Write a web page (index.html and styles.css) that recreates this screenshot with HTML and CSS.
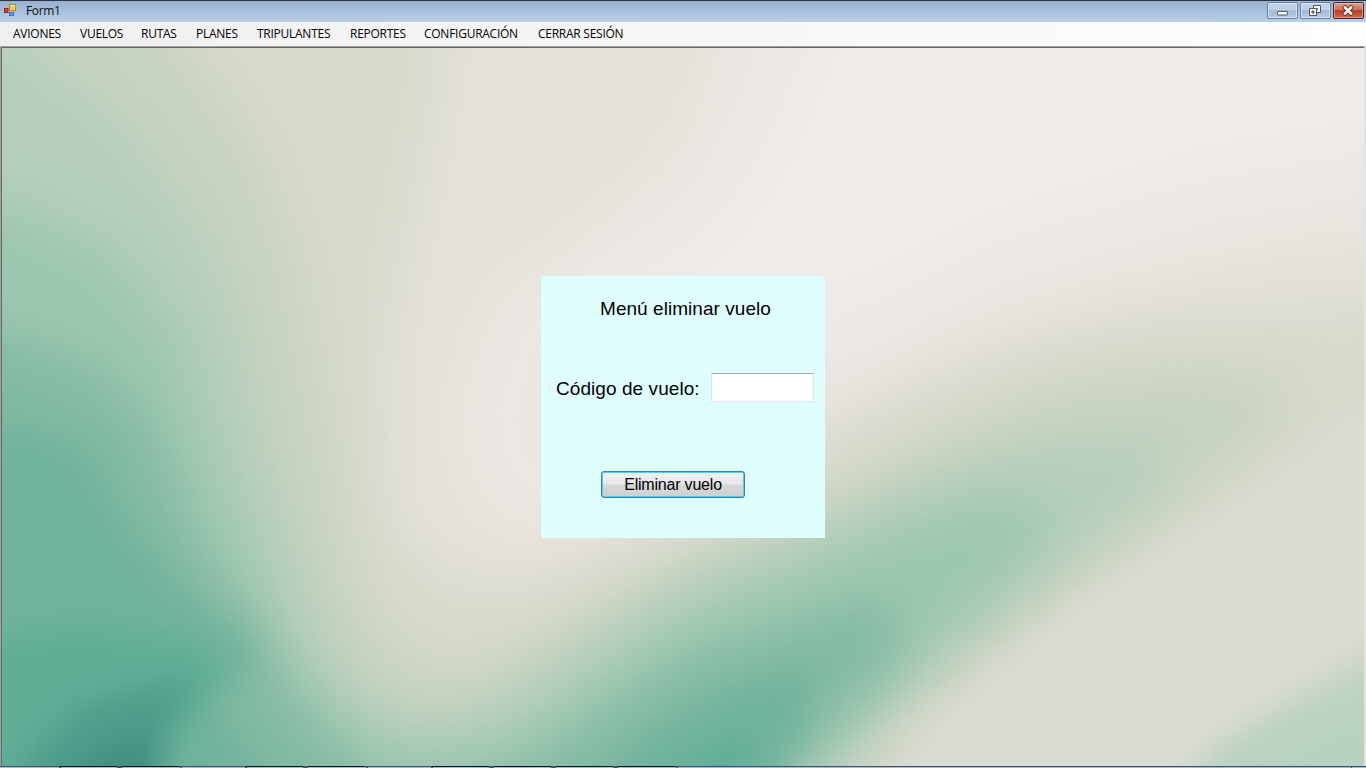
FILE: index.html
```html
<!DOCTYPE html>
<html lang="es">
<head>
<meta charset="utf-8">
<title>Form1</title>
<link rel="stylesheet" href="styles.css">
</head>
<body>
<div class="window">
  <header class="titlebar">
    <svg class="app-icon" width="14" height="13" viewBox="0 0 14 13">
      <rect x=".5" y="4.500" width="3.500" height="4" fill="#d4453c" stroke="#a11f1b"/>
      <rect x="5.500" y=".500" width="6" height="6" fill="#f6cf55" stroke="#b98a23"/>
      <rect x="5.500" y="8.500" width="4" height="3" fill="#6a9cec" stroke="#3d6fc4"/>
      <path d="M6.500 1.500h4.500" stroke="#fff0b0"/>
    </svg>
    <h1 class="title">Form1</h1>
    <div class="controls">
      <button class="control" aria-label="Minimizar">
        <svg width="29" height="16"><rect x="9.500" y="9.500" width="10" height="3.500" rx=".5" fill="#fff" stroke="#535866"/></svg>
      </button>
      <button class="control" aria-label="Restaurar">
        <svg width="29" height="16"><path d="M12.500 3.500h7v7h-7z" fill="#fff" stroke="#535866"/><path d="M15.500 6.500h1v1h-1z" fill="#8fa9c8" stroke="#535866"/><path d="M8.500 6.500h7v7h-7z" fill="#fff" stroke="#535866"/><path d="M11 9h2v2h-2z" fill="#8fa9c8" stroke="#535866"/></svg>
      </button>
      <button class="control close" aria-label="Cerrar">
        <svg width="29" height="16"><path d="M11 5.500l6 6M17 5.500l-6 6" stroke="#5a3a3c" stroke-width="4.400" stroke-linecap="square"/><path d="M11 5.500l6 6M17 5.500l-6 6" stroke="#f6f2f2" stroke-width="2.500" stroke-linecap="square"/></svg>
      </button>
    </div>
  </header>
  <nav class="menu">
    <span class="item">AVIONES</span><span class="item">VUELOS</span><span class="item">RUTAS</span><span class="item">PLANES</span><span class="item">TRIPULANTES</span><span class="item">REPORTES</span><span class="item">CONFIGURACIÓN</span><span class="item">CERRAR SESIÓN</span>
  </nav>
  <main class="client">
    <svg class="wallpaper" width="1362" height="718" viewBox="2 48 1362 718" preserveAspectRatio="none">
      <defs>
        <filter id="soft" filterUnits="userSpaceOnUse" x="-200" y="-150" width="1766" height="1118" color-interpolation-filters="sRGB"><feGaussianBlur stdDeviation="25"/></filter>
        <filter id="mid" filterUnits="userSpaceOnUse" x="-200" y="-150" width="1766" height="1118" color-interpolation-filters="sRGB"><feGaussianBlur stdDeviation="15"/></filter>
      </defs>
      <rect x="0" y="40" width="1366" height="728" fill="#e5e2da"/>
      <g filter="url(#soft)">
        <path fill="#eae6e1" d="M750-60H1500V210L1250 250 1000 320 850 400 700 450 580 535 490 530 450 420 490 300 600 220 680 150z"/>
        <path fill="#f0ebe8" d="M850-60H1500V130L1200 180 1000 240 880 300 700 370 600 380 600 290 700 240 760 160z"/>
      </g>
      <g filter="url(#soft)">
        <path fill="#d8dacc" d="M-150-60H430L450 46 430 150 410 250 390 350 385 450 395 520 425 560 470 585 530 585 600 560 650 540 700 515 830 435 900 398 1000 358 1100 328 1200 312 1500 295V950H-150z"/>
      </g>
      <g filter="url(#soft)">
        <path fill="#c8d3c1" d="M-150-60H120L190 46 260 150 295 250 315 350 335 450 350 550 375 620 415 660 460 675 520 650 600 605 690 555 800 510 850 483 950 430 1050 388 1160 370 1275 375 1290 420 1205 490 1120 555 1020 625 920 700 840 790 780 950H-150z"/>
        <path fill="#b5cfbb" d="M-150-60L20 30 130 130 210 240 245 350 265 450 295 550 320 630 355 685 400 720 470 715 530 680 600 635 690 576 800 535 870 503 960 468 1050 440 1170 440 1160 490 1070 560 980 630 895 695 815 785V950H-150z"/>
        <path fill="#b7d2be" d="M1500 625L1366 668 1290 700 1210 740 1100 850H1500z"/>
      </g>
      <g filter="url(#mid)">
        <path fill="#dbdcd2" d="M1500 340L1365 405 1270 480 1175 544 1085 602 995 672 930 730 870 830H1130L1220 735 1366 640 1500 590z"/>
      </g>
      <g filter="url(#soft)">
        <path fill="#9cc6af" d="M-150 190L0 200 110 250 180 340 210 450 250 550 284 640 315 690 355 725 400 748 480 745 530 725 600 672 690 615 800 570 900 525 1000 495 1060 520 1010 580 940 645 880 700 800 790V950H-150z"/>
        <path fill="#82baa3" d="M-150 320L0 335 100 370 155 430 185 520 230 590 268 640 290 690 340 750 400 800 520 770 610 708 690 655 790 625 890 595 900 660 840 715 780 780V950H-150z"/>
      </g>
      <g filter="url(#mid)">
        <path fill="#70b39c" d="M-100 430L20 425 85 450 130 530 180 590 235 630 255 655 215 710 260 768 290 900H-100zM590 790L650 735 730 690 810 670 800 730 750 820z"/>
        <path fill="#60ae96" d="M-100 660L0 635 90 625 200 645 225 675 175 740 160 860H-100zM630 800L690 760 745 735 758 755 730 810z"/>
        <path fill="#4e9d8a" d="M-20 860L30 750 80 705 150 685 200 682 160 742 150 850z"/>
        <path fill="#419080" d="M60 800L95 755 165 730 152 800z"/>
      </g>
    </svg>
    <section class="panel">
      <h2 class="heading">Menú eliminar vuelo</h2>
      <div class="field"><label class="label" for="codigo">Código de vuelo:</label><input class="input" id="codigo" type="text"></div>
      <button class="submit">Eliminar vuelo</button>
    </section>
  </main>
  <div class="edge">
    <svg width="1366" height="2"><path d="M0 .5H1366" stroke="#46546c"/><path d="M0 1.500H1366" stroke="#a6b8ce"/><path d="M60 .5h57M121 .5h58M246 .5h57M308 .5h57M432 .5h57M494 .5h57M556 .5h57M618 .5h57" stroke="#111820"/><path d="M59 1.500h2M117 1.500h5M180 1.500h2M245 1.500h2M303 1.500h5M366 1.500h2M431 1.500h2M489 1.500h5M551 1.500h5M613 1.500h5M676 1.500h2M1351 1.500h1" stroke="#4b5665"/></svg>
  </div>
</div>
</body>
</html>
```
FILE: styles.css
```css
* { box-sizing: border-box; }
body { margin: 0; overflow: hidden; }
.window { width: 1366px; height: 768px; display: flex; flex-direction: column; }
svg { display: block; }

.titlebar {
  height: 22px; flex: none; display: flex; align-items: flex-start;
  padding: 0 2px 0 4px; border-top: 1px solid #2b3444;
  background: linear-gradient(#98b1cf, #b7cfe9);
}
.app-icon { margin-top: 3px; }
.title {
  margin: 0 auto 0 8px; color: #0b0f16;
  font: 400 12px/19px "Open Sans", "Noto Sans", sans-serif; letter-spacing: -.35px;
}
.controls { display: flex; gap: 2px; padding-top: 1px; }
.control {
  width: 31px; height: 17px; padding: 0; overflow: hidden;
  border: 1px solid #6c83a3; border-radius: 2px;
  background: linear-gradient(#bfd1e6 0 45%, #a1bad7 50%, #b3cbe6);
  box-shadow: inset 0 0 0 1px rgba(255, 255, 255, .45);
}
.control svg { margin-top: -1px; }
.close {
  border-color: #53212a;
  background: linear-gradient(#dd9d8d 0, #cf7160 45%, #b83a25 50%, #cf6a4c);
  box-shadow: inset 0 0 0 1px rgba(255, 220, 210, .45);
}

.menu {
  height: 24px; flex: none; padding-left: 13px;
  display: grid; grid-template-columns: 67px 61px 55px 61px 93px 74px 114px auto;
  background: linear-gradient(90deg, #f0f0f0, #fdfdfd);
}
.item { font: 12px/24px "Open Sans", "Noto Sans", sans-serif; letter-spacing: -.26px; color: #000; white-space: nowrap; }

.client {
  height: 720px; flex: none; display: grid; place-items: center;
  padding: 1px 0 0 1px;
  border-style: solid; border-width: 1px 2px 0 1px;
  border-color: #a0a0a0 #e3e3e3 #e3e3e3 #a0a0a0;
  background: #696969;
}
.client > * { grid-area: 1 / 1; }
.panel {
  width: 284px; height: 262px; padding: 20px 11px 0 15px; z-index: 1;
  background: #dfffff; color: #000;
  font-family: "Liberation Sans", Arial, sans-serif;
}
.heading { margin: 0 0 0 44px; font-size: 19px; font-weight: 400; line-height: 25px; letter-spacing: .05px; white-space: nowrap; }
.field { display: flex; justify-content: space-between; align-items: center; margin-top: 52px; height: 29px; }
.label { padding-top: 2px; font-size: 19px; line-height: 29px; letter-spacing: .07px; white-space: nowrap; }
.input {
  width: 103px; height: 29px; padding: 2px 4px;
  border: 1px solid #dde6ed; border-top-color: #a5a8b3; border-radius: 1px;
  background: #fff; font: 19px "Liberation Sans", Arial, sans-serif; outline: 0;
}
.submit {
  display: block; width: 144px; height: 27px; margin: 69px 0 0 45px; padding: 0;
  border: 1px solid #3c7fa6; border-radius: 3px;
  box-shadow: inset 0 0 0 1px #5cc8ea;
  background: linear-gradient(#f1f1f1, #e7e7e7 49%, #d7d7d7 51%, #cfcfcf);
  font: 16px/24px "Liberation Sans", Arial, sans-serif; letter-spacing: -.2px; color: #000; white-space: nowrap;
}
.edge { height: 2px; flex: none; }
```
